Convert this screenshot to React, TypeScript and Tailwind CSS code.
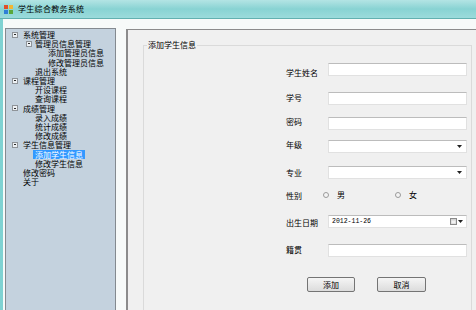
import React from 'react';

type TreeRow = {
  text: string;
  pad: string;
  expander?: string;
  selected?: boolean;
};

const treeRows: TreeRow[] = [
  { text: '系统管理', pad: 'pl-[6px]', expander: 'mr-[5px]' },
  { text: '管理员信息管理', pad: 'pl-[20px]', expander: 'mr-[3px]' },
  { text: '添加管理员信息', pad: 'pl-[42px]' },
  { text: '修改管理员信息', pad: 'pl-[42px]' },
  { text: '退出系统', pad: 'pl-[29px]' },
  { text: '课程管理', pad: 'pl-[6px]', expander: 'mr-[5px]' },
  { text: '开设课程', pad: 'pl-[29px]' },
  { text: '查询课程', pad: 'pl-[29px]' },
  { text: '成绩管理', pad: 'pl-[6px]', expander: 'mr-[5px]' },
  { text: '录入成绩', pad: 'pl-[29px]' },
  { text: '统计成绩', pad: 'pl-[29px]' },
  { text: '修改成绩', pad: 'pl-[29px]' },
  { text: '学生信息管理', pad: 'pl-[6px]', expander: 'mr-[5px]' },
  { text: '添加学生信息', pad: 'pl-[29px]', selected: true },
  { text: '修改学生信息', pad: 'pl-[29px]' },
  { text: '修改密码', pad: 'pl-[17px]' },
  { text: '关于', pad: 'pl-[17px]' },
];

function AppIcon() {
  return (
    <svg width="9" height="9" viewBox="0 0 9 9" className="mr-[5px]">
      <rect x="0" y="0" width="4" height="4" fill="#e0502a" />
      <rect x="5" y="0" width="4" height="4" fill="#f2b632" />
      <rect x="0" y="5" width="4" height="4" fill="#2f7fd6" />
      <rect x="5" y="5" width="4" height="4" fill="#5aa83c" />
    </svg>
  );
}

function Expander({ className }: { className: string }) {
  return (
    <span
      className={`w-[6px] h-[6px] border border-[#8f9499] bg-[#eef2f5] flex items-center justify-center ${className}`}
    >
      <span className="w-[2px] h-px bg-[#2a2a2a]" />
    </span>
  );
}

function DownArrow() {
  return (
    <svg width="5" height="3" viewBox="0 0 5 3">
      <path d="M0 0 H5 L2.5 3 Z" fill="#222" />
    </svg>
  );
}

const boxCls =
  'w-[139px] h-[13px] bg-white border border-[#e1e1e1] border-t-[#bcbcbc]';

function Label({ text, offset }: { text: string; offset: string }) {
  return (
    <span className={`w-[42px] shrink-0 text-[8px] leading-[10px] text-black ${offset}`}>
      {text}
    </span>
  );
}

function Radio({ label, className }: { label: string; className?: string }) {
  return (
    <span className={`flex items-center ${className ?? ''}`}>
      <span className="w-[6px] h-[6px] rounded-full border border-[#9a9a9a] bg-[#f4f4f4]" />
      <span className="ml-[8px] text-[8px] leading-[10px]">{label}</span>
    </span>
  );
}

export default function App() {
  return (
    <div className="w-[476px] h-[310px] overflow-hidden flex flex-col bg-[#f7faf9] font-['Noto_Sans_CJK_SC','Liberation_Sans',sans-serif] text-black">
      {/* title bar */}
      <div className="h-[19px] shrink-0 flex items-center pl-[4px] border-b border-[#62b0b0] bg-gradient-to-b from-[#b3e4e4] via-[#88d3d3] to-[#9bdbdb]">
        <AppIcon />
        <span className="text-[8px] leading-[10px] tracking-[0.3px]">学生综合教务系统</span>
      </div>

      <div className="flex-1 flex pt-[9px] border-l-[3px] border-[#7fd2d2]">
        {/* tree view */}
        <div className="ml-[2px] w-[111px] shrink-0 border border-[#848a90] bg-[#c4d2de] pt-px">
          {treeRows.map((row) => (
            <div key={row.text} className={`h-[9.2px] flex items-center ${row.pad}`}>
              {row.expander && <Expander className={row.expander} />}
              {row.selected ? (
                <span className="-ml-[2px] px-[2px] bg-[#3399ff] text-white text-[8px] leading-[9px]">
                  {row.text}
                </span>
              ) : (
                <span className="text-[8px] leading-[9px] whitespace-nowrap">{row.text}</span>
              )}
            </div>
          ))}
        </div>

        {/* content panel */}
        <div className="ml-[10px] mt-px flex-1 border-l-2 border-t border-[#8c8c8c] bg-[#f0f0f0]">
          <fieldset className="ml-[15px] mt-[10px] w-[329px] h-[290px] border border-[#dadada] p-0 m-0">
            <legend className="ml-[3px] px-[1px] text-[8px] leading-[10px]">添加学生信息</legend>

            <div className="pl-[142px] flex flex-col">
              <div className="mt-[13px] h-[13px] flex items-start">
                <Label text="学生姓名" offset="mt-[5px]" />
                <div className={boxCls} />
              </div>

              <div className="mt-[16px] h-[13px] flex items-start">
                <Label text="学号" offset="mt-[1px]" />
                <div className={boxCls} />
              </div>

              <div className="mt-[12px] h-[13px] flex items-start">
                <Label text="密码" offset="mt-0" />
                <div className={boxCls} />
              </div>

              <div className="mt-[10px] h-[13px] flex items-start">
                <Label text="年级" offset="mt-0" />
                <div className={`${boxCls} flex items-center justify-end pr-[4px]`}>
                  <DownArrow />
                </div>
              </div>

              <div className="mt-[13px] h-[13px] flex items-start">
                <Label text="专业" offset="mt-[2px]" />
                <div className={`${boxCls} flex items-center justify-end pr-[4px]`}>
                  <DownArrow />
                </div>
              </div>

              <div className="mt-[9px] h-[13px] flex items-center">
                <span className="w-[37px] shrink-0 text-[8px] leading-[10px] mt-[2px]">性别</span>
                <Radio label="男" />
                <Radio label="女" className="ml-[50px]" />
              </div>

              <div className="mt-[14px] h-[13px] flex items-start">
                <Label text="出生日期" offset="mt-[3px]" />
                <div className={`${boxCls} flex items-center pl-[3px] pr-[3px]`}>
                  <span className="font-['Liberation_Mono',monospace] text-[6.5px] leading-[8px]">2012-11-26</span>
                  <span className="ml-auto flex items-center gap-[1px]">
                    <svg width="7" height="7" viewBox="0 0 7 7">
                      <rect x="0.5" y="0.5" width="6" height="6" fill="#d4d4d4" stroke="#8a8a8a" />
                      <rect x="1.5" y="2.5" width="4" height="3" fill="#f2f2f2" />
                    </svg>
                    <DownArrow />
                  </span>
                </div>
              </div>

              <div className="mt-[16px] h-[13px] flex items-start">
                <Label text="籍贯" offset="mt-px" />
                <div className={boxCls} />
              </div>

              <div className="mt-[20px] pl-[21px] flex gap-[22px]">
                <button className="w-[48px] h-[15px] border border-[#747474] rounded-[2px] bg-gradient-to-b from-[#f5f5f5] to-[#dcdcdc] text-[8px] leading-[10px]">
                  添加
                </button>
                <button className="w-[49px] h-[15px] border border-[#747474] rounded-[2px] bg-gradient-to-b from-[#f5f5f5] to-[#dcdcdc] text-[8px] leading-[10px]">
                  取消
                </button>
              </div>
            </div>
          </fieldset>
        </div>
      </div>
    </div>
  );
}
